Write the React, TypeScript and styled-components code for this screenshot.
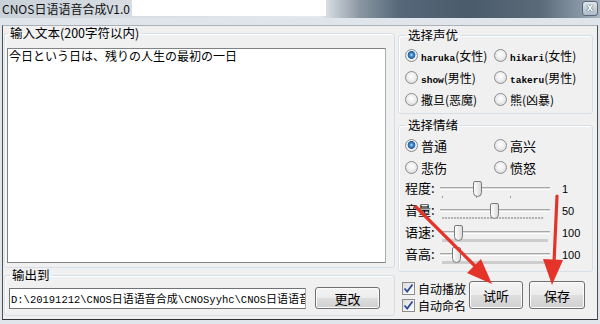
import React from 'react';
import styled, { createGlobalStyle } from 'styled-components';

const GlobalStyle = createGlobalStyle`
  html, body {
    margin: 0;
    padding: 0;
    background: #ffffff;
  }
  body {
    font-family: 'Noto Sans CJK SC', 'Noto Sans', sans-serif;
    font-size: 12px;
    color: #000;
  }
`;

const Window = styled.div`
  position: relative;
  width: 600px;
  height: 324px;
  display: flex;
  flex-direction: column;
  background: #dfe5eb;
  overflow: hidden;
`;

const TitleBar = styled.div`
  height: 18px;
  display: flex;
  align-items: flex-start;
  background: linear-gradient(
    to right,
    #c9d1d9 0px,
    #d6dce2 120px,
    #e6eaee 320px,
    #8996a2 360px,
    #56677a 400px,
    #4a5b6b 470px,
    #5b6a78 540px,
    #8796a4 580px,
    #a9b5c0 600px
  );
`;

const TitleText = styled.span`
  padding: 0 2px;
  line-height: 17px;
  font-size: 12px;
  color: #111;
  white-space: nowrap;
`;

const TitleMask = styled.span`
  width: 194px;
  height: 16px;
  background: #ffffff;
`;

const CloseBtn = styled.span`
  margin: 1px 2px 0 auto;
  width: 14px;
  height: 13px;
  border: 1px solid #5a6877;
  border-radius: 3px;
  background: linear-gradient(#dfe6ec, #aebbc7);
  color: #ffffff;
  font: bold 10px/12px 'DejaVu Sans', sans-serif;
  text-align: center;
  text-shadow: 0 0 1px #33404d, 0 0 1px #33404d;
`;

const Frame = styled.div`
  flex: 1;
  display: flex;
  padding: 7px 2px 4px 2px;
`;

const Client = styled.div`
  flex: 1;
  display: grid;
  grid-template-columns: 391px 195px;
  column-gap: 3px;
  padding: 0 4px 0 1px;
  border: 1px solid;
  border-color: #aab2ba #4b4f54 #2f3236 #4b4f54;
  background: #f0f0f0;
`;

const Column = styled.div<{ $top?: number }>`
  display: flex;
  flex-direction: column;
  padding-top: ${({ $top }) => $top || 0}px;
`;

const Group = styled.fieldset<{ $pad: string; $mt?: number }>`
  margin: ${({ $mt }) => $mt || 0}px 0 0 0;
  padding: ${({ $pad }) => $pad};
  min-width: 0;
  border: 1px solid #d5dfe5;
  border-radius: 3px;
  box-shadow: inset 1px 1px 0 #ffffff;
`;

const Legend = styled.legend`
  margin-left: 1px;
  padding: 0 2px;
  line-height: 14px;
  font-size: 12.5px;
  color: #000;
`;

const TextBox = styled.textarea`
  display: block;
  box-sizing: border-box;
  width: 100%;
  height: 215px;
  margin: 0;
  padding: 0 1px;
  border: 1px solid #7f8386;
  border-right-color: #a9acaf;
  background: #ffffff;
  font-family: 'Noto Sans CJK JP', 'Noto Sans CJK SC', sans-serif;
  font-size: 12px;
  line-height: 14px;
  color: #000;
  resize: none;
  overflow: hidden;
  outline: none;
`;

const OutputRow = styled.div`
  display: flex;
  align-items: center;
  gap: 9px;
`;

const PathBox = styled.div`
  box-sizing: border-box;
  width: 297px;
  height: 21px;
  padding-left: 1px;
  border: 1px solid #6f7377;
  border-right-color: #a9acaf;
  background: #ffffff;
  line-height: 19px;
  white-space: nowrap;
  overflow: hidden;
  font-size: 11px;
`;

const Mono = styled.span<{ $size?: number; $bold?: boolean }>`
  font-family: 'Liberation Mono', 'DejaVu Sans Mono', monospace;
  font-size: ${({ $size }) => $size || 10.5}px;
  font-weight: ${({ $bold }) => ($bold ? 700 : 400)};
`;

const Button = styled.button<{ $w: number; $h: number }>`
  box-sizing: border-box;
  width: ${({ $w }) => $w}px;
  height: ${({ $h }) => $h}px;
  padding: 0;
  border: 1px solid #707070;
  border-radius: 3px;
  background: linear-gradient(#f4f4f4 0%, #ececec 48%, #dedede 52%, #d0d0d0 100%);
  box-shadow: inset 0 0 0 1px #fbfbfb;
  font-family: 'Noto Sans CJK SC', sans-serif;
  font-size: 13px;
  color: #000;
`;

const RadioGrid = styled.div`
  display: grid;
  grid-template-columns: 89px 1fr;
  grid-auto-rows: 22px;
  padding-top: 1px;
`;

const Choice = styled.label<{ $size?: number }>`
  display: flex;
  align-items: center;
  gap: 3px;
  font-size: ${({ $size }) => $size || 12}px;
  white-space: nowrap;
`;

const Radio = styled.span<{ $checked?: boolean }>`
  flex: none;
  box-sizing: border-box;
  width: 13px;
  height: 13px;
  border-radius: 50%;
  border: 1px solid #8a8c8e;
  background: ${({ $checked }) =>
    $checked
      ? 'radial-gradient(circle at 50% 45%, #c6e6fc 0, #4a93d6 1.5px, #1d5b9e 3.6px, #f6f6f6 4.2px, #d6d6d6 100%)'
      : 'radial-gradient(circle at 50% 40%, #ffffff 0, #f1f1f1 40%, #d2d2d2 100%)'};
`;

const SliderRow = styled.div`
  display: grid;
  grid-template-columns: 35px 110px 1fr;
  align-items: center;
  height: 22px;
`;

const SliderLabel = styled.span`
  font-size: 13px;
  line-height: 22px;
  margin-top: -2px;
  white-space: nowrap;
`;

const Track = styled.div`
  position: relative;
  height: 22px;
  display: flex;
  flex-direction: column;
`;

const Rail = styled.div`
  margin-top: 9px;
  height: 1px;
  border-top: 1px solid #a7a7a7;
  border-bottom: 1px solid #ffffff;
  background: #dcdcdc;
`;

const Ticks = styled.div<{ $kind: 'sparse' | 'dense' | 'solid' }>`
  margin: ${({ $kind }) => ($kind === 'sparse' ? 6 : 5)}px 0 0 2px;
  width: ${({ $kind }) => ($kind === 'solid' ? 106 : 102)}px;
  height: ${({ $kind }) => ($kind === 'solid' ? 3 : 2)}px;
  background: ${({ $kind }) =>
    $kind === 'sparse'
      ? 'repeating-linear-gradient(to right, #9a9a9a 0 1px, transparent 1px 34px)'
      : $kind === 'dense'
      ? 'repeating-linear-gradient(to right, #b4b4b4 0 2px, #e8e8e8 2px 3px)'
      : '#cdcdcd'};
`;

const Thumb = styled.svg`
  position: absolute;
  top: 3px;
`;

const Value = styled.span`
  margin-left: 12px;
  font-family: 'Liberation Sans', Arial, sans-serif;
  font-size: 11px;
`;

const BottomRow = styled.div`
  display: flex;
  align-items: flex-start;
  margin-top: 8px;
  padding-left: 4px;
`;

const CheckList = styled.div`
  display: flex;
  flex-direction: column;
  width: 67px;
`;

const CheckItem = styled.label`
  display: flex;
  align-items: center;
  gap: 3px;
  height: 17px;
  font-size: 12px;
  white-space: nowrap;
`;

const CheckBox = styled.span`
  flex: none;
  box-sizing: border-box;
  width: 13px;
  height: 13px;
  border: 1px solid #8a8c8e;
  background: linear-gradient(135deg, #dcdcdc, #ffffff);
  display: flex;
  align-items: center;
  justify-content: center;
`;

const ButtonPair = styled.div`
  display: flex;
  gap: 6px;
  margin-top: 1px;
`;

const Overlay = styled.svg`
  position: absolute;
  left: 0;
  top: 0;
  pointer-events: none;
`;

const voices = [
  { latin: 'haruka', cjk: '(女性)', checked: true },
  { latin: 'hikari', cjk: '(女性)' },
  { latin: 'show', cjk: '(男性)' },
  { latin: 'takeru', cjk: '(男性)' },
  { latin: '', cjk: '撒旦(恶魔)' },
  { latin: '', cjk: '熊(凶暴)' },
];

const moods = [
  { name: '普通', checked: true },
  { name: '高兴' },
  { name: '悲伤' },
  { name: '愤怒' },
];

const sliders: { name: string; pos: number; value: string; ticks: 'sparse' | 'dense' | 'solid' }[] = [
  { name: '程度', pos: 33, value: '1', ticks: 'sparse' },
  { name: '音量', pos: 50, value: '50', ticks: 'dense' },
  { name: '语速', pos: 14, value: '100', ticks: 'solid' },
  { name: '音高', pos: 12, value: '100', ticks: 'solid' },
];

const SliderThumb = ({ left }: { left: number }) => (
  <Thumb width='9' height='16' viewBox='0 0 9 16' style={{ left }}>
    <defs>
      <linearGradient id='thumbFill' x1='0' y1='0' x2='1' y2='0'>
        <stop offset='0' stopColor='#ffffff' />
        <stop offset='1' stopColor='#d9d9d9' />
      </linearGradient>
    </defs>
    <path
      d='M0.5 2 Q0.5 0.5 2 0.5 H7 Q8.5 0.5 8.5 2 V11.5 Q8.5 15.5 4.5 15.5 Q0.5 15.5 0.5 11.5 Z'
      fill='url(#thumbFill)'
      stroke='#7a7a7a'
    />
  </Thumb>
);

const Tick = () => (
  <svg width='11' height='11' viewBox='0 0 11 11'>
    <path d='M1.5 5.5 L4.2 8.5 L9.5 1.5' fill='none' stroke='#2b4a9a' strokeWidth='1.8' />
  </svg>
);

const Arrows = () => (
  <Overlay width='600' height='324' viewBox='0 0 600 324'>
    <g fill='#e4342a' stroke='#e4342a'>
      <line x1='416' y1='207' x2='478' y2='269' strokeWidth='3.2' strokeLinecap='round' />
      <polygon points='492,284 467,273 481,259' stroke='none' />
      <line x1='557' y1='196' x2='554' y2='263' strokeWidth='3.2' strokeLinecap='round' />
      <polygon points='552,285 543,259 563,260' stroke='none' />
    </g>
  </Overlay>
);

const App = () => {
  return (
    <>
      <GlobalStyle />
      <Window>
        <TitleBar>
          <TitleText>CNOS日语语音合成V1.0</TitleText>
          <TitleMask />
          <CloseBtn>x</CloseBtn>
        </TitleBar>
        <Frame>
          <Client>
            <Column>
              <Group $pad='8px 8px 4px 2px'>
                <Legend>输入文本(200字符以内)</Legend>
                <TextBox readOnly defaultValue='今日という日は、残りの人生の最初の一日' />
              </Group>
              <Group $pad='5px 8px 6px 4px'>
                <Legend>输出到</Legend>
                <OutputRow>
                  <PathBox>
                    <Mono>D:\20191212\CNOS</Mono>日语语音合成<Mono>\CNOSyyhc\CNOS</Mono>日语语音合成
                  </PathBox>
                  <Button $w={65} $h={22}>更改</Button>
                </OutputRow>
              </Group>
            </Column>
            <Column $top={2}>
              <Group $pad='1px 4px 3px 6px'>
                <Legend>选择声优</Legend>
                <RadioGrid>
                  {voices.map((v) => (
                    <Choice key={v.latin + v.cjk}>
                      <Radio $checked={v.checked} />
                      <span>
                        {v.latin && <Mono $size={9.5} $bold>{v.latin}</Mono>}
                        {v.cjk}
                      </span>
                    </Choice>
                  ))}
                </RadioGrid>
              </Group>
              <Group $pad='1px 4px 5px 6px' $mt={4}>
                <Legend>选择情绪</Legend>
                <RadioGrid>
                  {moods.map((m) => (
                    <Choice key={m.name} $size={13}>
                      <Radio $checked={m.checked} />
                      <span>{m.name}</span>
                    </Choice>
                  ))}
                </RadioGrid>
                {sliders.map((s) => (
                  <SliderRow key={s.name}>
                    <SliderLabel>{s.name}:</SliderLabel>
                    <Track>
                      <Rail />
                      <Ticks $kind={s.ticks} />
                      <SliderThumb left={s.pos} />
                    </Track>
                    <Value>{s.value}</Value>
                  </SliderRow>
                ))}
              </Group>
              <BottomRow>
                <CheckList>
                  <CheckItem>
                    <CheckBox>
                      <Tick />
                    </CheckBox>
                    自动播放
                  </CheckItem>
                  <CheckItem>
                    <CheckBox>
                      <Tick />
                    </CheckBox>
                    自动命名
                  </CheckItem>
                </CheckList>
                <ButtonPair>
                  <Button $w={54} $h={28}>试听</Button>
                  <Button $w={56} $h={28}>保存</Button>
                </ButtonPair>
              </BottomRow>
            </Column>
          </Client>
        </Frame>
        <Arrows />
      </Window>
    </>
  );
};

export default App;
